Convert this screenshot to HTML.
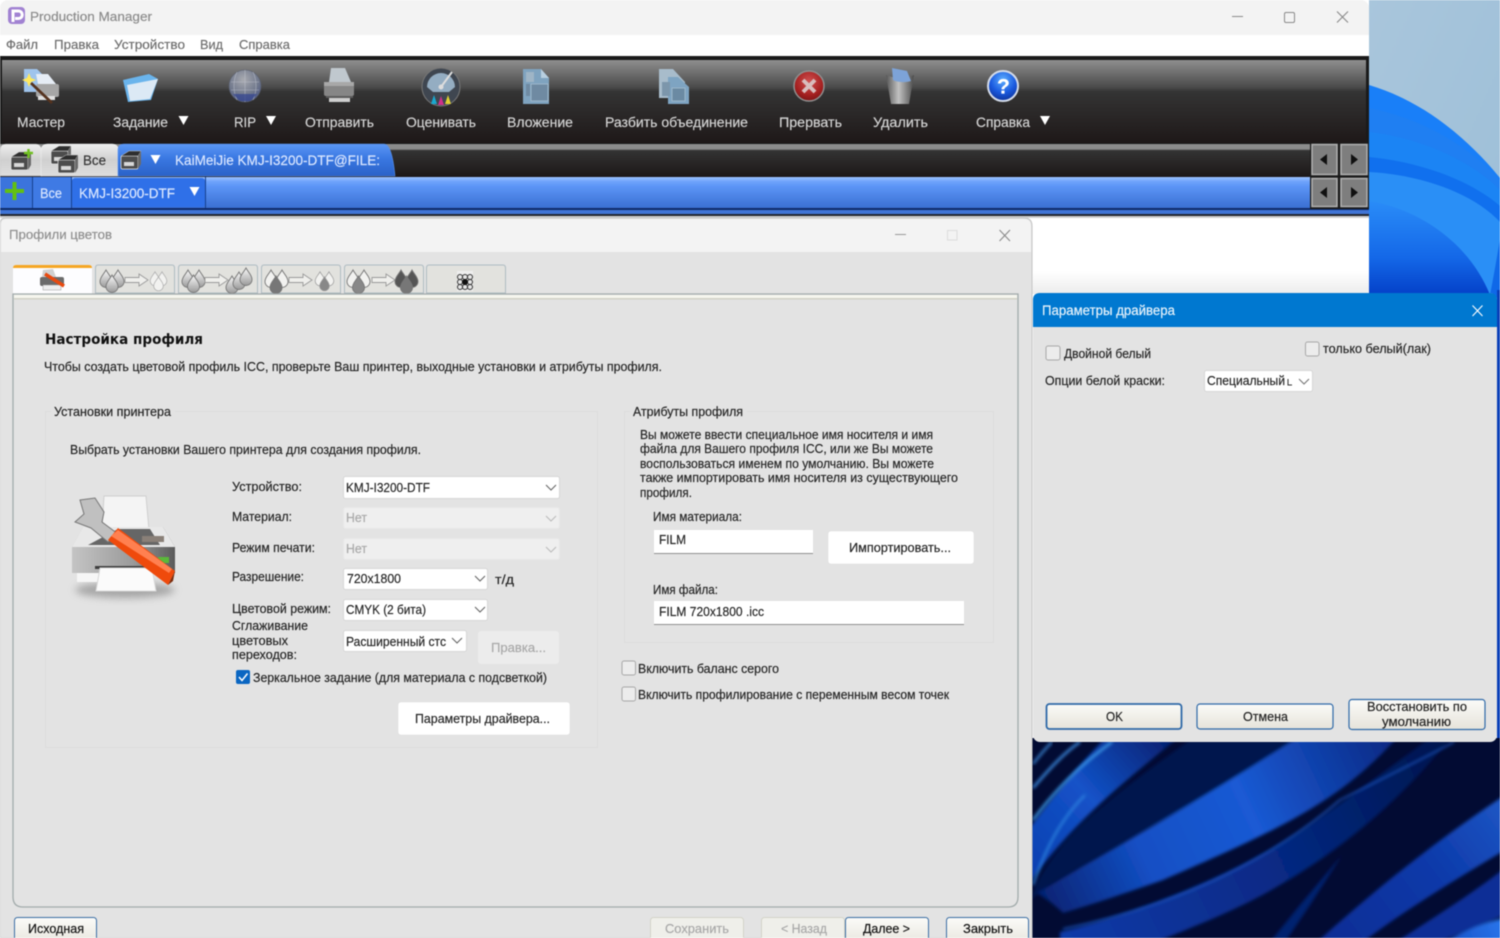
<!DOCTYPE html>
<html lang="ru"><head><meta charset="utf-8"><title>Production Manager</title>
<style>
html,body{margin:0;padding:0;width:1500px;height:938px;overflow:hidden;background:#fff}
svg{display:block;filter:blur(.45px)}
text{font-family:"Liberation Sans","DejaVu Sans",sans-serif;font-size:12.5px;fill:#262626;stroke:#262626;stroke-width:.18px}
.m{fill:#6e6e6e;stroke:#6e6e6e;font-size:12.5px}
.tb{fill:#d4d4d4;stroke:#d4d4d4;font-size:14px}
.d{fill:#a8a8a8;stroke:#a8a8a8}
.w{fill:#dbe7ff;stroke:#dbe7ff;font-size:14px}
</style></head><body>
<svg width="1500" height="938" viewBox="0 0 1500 938" xmlns="http://www.w3.org/2000/svg">
<defs>
<filter id="soft" x="-5%" y="-5%" width="110%" height="110%"><feGaussianBlur stdDeviation="1.6"/></filter>
<filter id="shad" x="-20%" y="-50%" width="140%" height="200%"><feGaussianBlur stdDeviation="4"/></filter>
<linearGradient id="sky" x1="0" y1="0" x2="1" y2="1"><stop offset="0" stop-color="#a9c6dc"/><stop offset="1" stop-color="#9dbfd8"/></linearGradient>
<linearGradient id="tbg" x1="0" y1="0" x2="0" y2="1"><stop offset="0" stop-color="#8f8f8f"/><stop offset=".33" stop-color="#4a4a4a"/><stop offset=".38" stop-color="#343434"/><stop offset="1" stop-color="#1e1818"/></linearGradient>
<linearGradient id="tab2" x1="0" y1="0" x2="0" y2="1"><stop offset="0" stop-color="#8c8c8c"/><stop offset=".15" stop-color="#8c8c8c"/><stop offset=".2" stop-color="#333"/><stop offset="1" stop-color="#1c1717"/></linearGradient>
<linearGradient id="blueb" x1="0" y1="0" x2="0" y2="1"><stop offset="0" stop-color="#9cc2ff"/><stop offset=".15" stop-color="#6ea3fb"/><stop offset=".3" stop-color="#5c95f6"/><stop offset="1" stop-color="#3a6fd2"/></linearGradient>
<linearGradient id="bluet" x1="0" y1="0" x2="0" y2="1"><stop offset="0" stop-color="#5b97f5"/><stop offset=".45" stop-color="#3a78e2"/><stop offset="1" stop-color="#2a62c8"/></linearGradient>
<linearGradient id="greyt" x1="0" y1="0" x2="0" y2="1"><stop offset="0" stop-color="#f0f0f0"/><stop offset=".5" stop-color="#d0d0d0"/><stop offset="1" stop-color="#dedede"/></linearGradient>
<linearGradient id="btn" x1="0" y1="0" x2="0" y2="1"><stop offset="0" stop-color="#fbfbf8"/><stop offset="1" stop-color="#e6e3da"/></linearGradient>
<linearGradient id="whitefade" x1="0" y1="0" x2="0" y2="1"><stop offset="0" stop-color="#fff"/><stop offset=".7" stop-color="#fff"/><stop offset="1" stop-color="#ececec"/></linearGradient>
<linearGradient id="w2" x1="0" y1="0" x2="0" y2="1"><stop offset="0" stop-color="#2a8cf8"/><stop offset=".6" stop-color="#1468e8"/><stop offset="1" stop-color="#0440c8"/></linearGradient>
<linearGradient id="swA" gradientUnits="userSpaceOnUse" x1="1033" y1="880" x2="1180" y2="750"><stop offset="0" stop-color="#0d3fb0"/><stop offset=".5" stop-color="#1352c8"/><stop offset="1" stop-color="#052070"/></linearGradient>
<linearGradient id="swB" gradientUnits="userSpaceOnUse" x1="1040" y1="910" x2="1390" y2="745"><stop offset="0" stop-color="#05206e"/><stop offset=".3" stop-color="#134fc4"/><stop offset=".6" stop-color="#1a5ad4"/><stop offset="1" stop-color="#082a86"/></linearGradient>
<linearGradient id="swC" gradientUnits="userSpaceOnUse" x1="1063" y1="930" x2="1440" y2="745"><stop offset="0" stop-color="#0c3aa8"/><stop offset=".5" stop-color="#072a86"/><stop offset="1" stop-color="#031650"/></linearGradient>
<linearGradient id="swD" gradientUnits="userSpaceOnUse" x1="1320" y1="938" x2="1500" y2="800"><stop offset="0" stop-color="#0a2c94"/><stop offset=".6" stop-color="#0d3aaa"/><stop offset="1" stop-color="#1d56c4"/></linearGradient>
<linearGradient id="swE" gradientUnits="userSpaceOnUse" x1="1400" y1="938" x2="1500" y2="900"><stop offset="0" stop-color="#0d3ab0"/><stop offset="1" stop-color="#2a78ee"/></linearGradient>
<radialGradient id="help" cx=".5" cy=".3" r=".75"><stop offset="0" stop-color="#5fb0ff"/><stop offset=".55" stop-color="#1a5ae0"/><stop offset="1" stop-color="#0c2d90"/></radialGradient>
<radialGradient id="red" cx=".5" cy=".35" r=".75"><stop offset="0" stop-color="#d05050"/><stop offset=".6" stop-color="#a52020"/><stop offset="1" stop-color="#6a1010"/></radialGradient>
<radialGradient id="glb" cx=".45" cy=".3" r=".8"><stop offset="0" stop-color="#a8aab0"/><stop offset=".6" stop-color="#70788c"/><stop offset="1" stop-color="#3d4a80"/></radialGradient>
<linearGradient id="trash" x1="0" y1="0" x2="1" y2="0"><stop offset="0" stop-color="#555"/><stop offset=".45" stop-color="#c2c2c2"/><stop offset="1" stop-color="#4a4a4a"/></linearGradient>
<linearGradient id="pbody" x1="0" y1="0" x2="1" y2="0"><stop offset="0" stop-color="#c4c4c4"/><stop offset=".6" stop-color="#9a9a9a"/><stop offset="1" stop-color="#5a5a5a"/></linearGradient>
<linearGradient id="dg" x1="0" y1="0" x2="0" y2="1"><stop offset="0" stop-color="#fafafa"/><stop offset="1" stop-color="#9a9a9a"/></linearGradient>
<path id="drop" d="M0,-9C2,-5 6,-2 6,2.5A6,6 0 0 1 -6,2.5C-6,-2 -2,-5 0,-9Z"/>
<path id="arr" d="M0,-2.5H14V-6L23,0L14,6V2.5H0Z" fill="#efefec" stroke="#9a9a9a"/>
<g id="cam"><rect x="-10" y="-5" width="17" height="13" rx="1.5" fill="#4c4c4c" stroke="#e6e6e6" stroke-width=".7"/><path d="M-10,-5L-2,-10H10L7,-5Z" fill="#2e2e2e" stroke="#ccc" stroke-width=".5"/><path d="M7,-5L10,-10V3L7,8Z" fill="#6a6a6a"/><rect x="-7" y="1" width="10" height="4" fill="#d8d8d8"/></g>
</defs>

<!-- wallpaper top -->
<rect x="1369" y="0" width="131" height="300" fill="url(#sky)"/>
<path d="M1369,85C1420,100 1465,135 1500,178V300H1369Z" fill="#197ff8"/>
<path d="M1369,108C1420,118 1468,145 1500,180V300H1369Z" fill="#1f7ff2"/>
<path d="M1369,132C1420,138 1470,160 1500,190V300H1369Z" fill="#1b84f4"/>
<path d="M1369,157C1420,162 1470,180 1500,206V300H1369Z" fill="#1070ee"/>
<path d="M1369,172C1425,175 1475,195 1500,222V300H1369Z" fill="#2a8ff6"/>
<path d="M1369,201C1415,208 1468,240 1490,295H1369Z" fill="url(#w2)"/>
<path d="M1490,295C1495,270 1498,250 1500,240V300H1490Z" fill="#0f68e8"/>
<rect x="1497" y="290" width="3" height="460" fill="#0a3fb8"/>

<!-- wallpaper bottom -->
<rect x="1032" y="738" width="468" height="200" fill="#020b33"/>
<g filter="url(#soft)">
<path d="M1030,900C1050,840 1120,790 1190,740H1300C1220,790 1140,830 1090,860C1060,878 1045,885 1037,895Z" fill="#03124e"/>
<path d="M1028,885C1070,825 1120,785 1178,738H1105C1075,770 1050,800 1028,830Z" fill="url(#swA)"/>
<path d="M1037,893C1097,857 1180,813 1297,738H1397C1340,800 1290,825 1163,880C1120,895 1090,905 1063,913C1055,905 1045,898 1037,893Z" fill="url(#swB)"/>
<path d="M1060,932C1120,918 1230,880 1310,825C1360,790 1400,760 1430,738H1450C1410,790 1350,845 1280,885C1230,915 1170,935 1150,945H1060Z" fill="url(#swC)"/>
<path d="M1317,942C1380,885 1440,838 1505,795V850C1455,880 1405,910 1363,942Z" fill="url(#swD)"/>
<path d="M1396,942C1430,920 1470,895 1505,868V915C1480,925 1455,935 1440,942Z" fill="#0b2f96"/>
<path d="M1445,942C1465,930 1485,922 1505,918V942Z" fill="url(#swE)"/>
<path d="M1270,942L1300,905L1342,855L1310,905L1285,942Z" fill="#062070"/>
</g>
<path d="M1033,764C1040,755 1046,748 1052,742" stroke="#3f90e0" stroke-width="2" fill="none" filter="url(#soft)"/>
<path d="M1033,788C1050,768 1065,752 1080,742" stroke="#3c8ce0" stroke-width="2.500" fill="none" filter="url(#soft)"/>
<path d="M1033,820C1055,790 1080,765 1112,742" stroke="#3c9ae8" stroke-width="2.500" fill="none" filter="url(#soft)"/>
<path d="M1033,885C1045,850 1060,820 1085,795" stroke="#2f86e0" stroke-width="2" fill="none" filter="url(#soft)"/>
<path d="M1063,929C1180,905 1270,860 1340,800C1400,770 1430,755 1454,742" stroke="#1f5cc8" stroke-width="1.500" fill="none" filter="url(#soft)"/>

<!-- main window -->
<rect x="0" y="0" width="1369" height="60" rx="8" fill="#f3f3f3"/>
<rect x="0" y="35" width="1369" height="21" fill="#fff"/>
<rect x="8" y="7" width="17" height="17" rx="4" fill="#a182d2"/>
<path d="M13,22V11H18.500A3.700,3.700 0 0 1 18.500,18.500H15" fill="none" stroke="#fff" stroke-width="3"/>
<text x="30" y="21" textLength="122" lengthAdjust="spacingAndGlyphs" style="font-size:13px;fill:#8b8b8b;stroke:#8b8b8b">Production Manager</text>
<path d="M1232,16.500H1243" stroke="#8a8a8a"/>
<rect x="1284.500" y="12.500" width="10" height="10" rx="1.500" fill="none" stroke="#8a8a8a"/>
<path d="M1337,11.500L1348,22.500M1348,11.500L1337,22.500" stroke="#8a8a8a" stroke-width="1.100"/>
<text class="m" x="6" y="49" textLength="32" lengthAdjust="spacingAndGlyphs">Файл</text>
<text class="m" x="54" y="49" textLength="45" lengthAdjust="spacingAndGlyphs">Правка</text>
<text class="m" x="114" y="49" textLength="71" lengthAdjust="spacingAndGlyphs">Устройство</text>
<text class="m" x="200" y="49" textLength="23" lengthAdjust="spacingAndGlyphs">Вид</text>
<text class="m" x="239" y="49" textLength="51" lengthAdjust="spacingAndGlyphs">Справка</text>

<rect x="0" y="56" width="1369" height="162" fill="#1a1a1a"/>
<rect x="2" y="60" width="1364" height="83" fill="url(#tbg)"/>

<!-- toolbar icons -->
<g>
<path d="M24,69H37L44,76V92H24Z" fill="#9fc4ec"/><path d="M36,74H48L56,84H38Z" fill="#e6edf5"/><rect x="36" y="84" width="23" height="13" rx="2" fill="#a6a6a6"/><rect x="38" y="96" width="17" height="4" fill="#e0e0e0"/><path d="M31,83L52,103" stroke="#55321e" stroke-width="2.800"/><path d="M29,73l2,5 5,2-5,2-2,5-2-5-5-2 5-2Z" fill="#ffe95e"/>
<path d="M123,80L149,74L158,79L151,100L128,102Z" fill="#6ab4ec"/><path d="M127,85L158,79L150,99L130,101Z" fill="#dce9f5"/>
<circle cx="245" cy="86" r="16" fill="url(#glb)" stroke="#5a6070" stroke-width=".6"/><path d="M231,82H259M231,90H259M245,70V102M237,72C233,80 233,92 237,100M253,72C257,80 257,92 253,100" stroke="#c6cad4" stroke-width=".6" fill="none" opacity=".7"/><path d="M233,94H257L250,101H240Z" fill="#3a4a90" opacity=".8"/>
<path d="M331,68H345L351,82H329Z" fill="#c0c8ce"/><rect x="324" y="82" width="30" height="14" rx="2" fill="#868686"/><rect x="324" y="82" width="30" height="4" fill="#a8a8a8"/><rect x="329" y="96" width="21" height="6" fill="#cfcfcf"/><rect x="326" y="96" width="27" height="2" fill="#5c5c5c"/>
<circle cx="441" cy="87" r="19" fill="#3f4650" stroke="#777"/><path d="M427,87A14,14 0 0 1 455,87L449,92H433Z" fill="#94adc2"/><path d="M441,87L452,72" stroke="#ddd" stroke-width="2"/><circle cx="441" cy="87" r="2.500" fill="#ddd"/><path d="M431,104l3-9 3,9Z" fill="#19a9d0"/><path d="M438,105l3-9 3,9Z" fill="#d0308a"/><path d="M445,104l3-9 3,9Z" fill="#e0d030"/>
<path d="M523,69H541L549,78V104H523Z" fill="#7fa3bf"/><path d="M541,69L549,78H541Z" fill="#b8cfe0"/><rect x="531" y="84" width="17" height="17" fill="#6f8aa2" stroke="#9cb6ca"/><rect x="526" y="72" width="8" height="10" fill="#9fb5c6"/><rect x="526" y="84" width="4" height="12" fill="#6f8aa2"/>
<path d="M645,69H659L671,82V98H645Z" transform="translate(14 0)" fill="#a8bccb"/><path d="M668,77H678L689,87V104H668Z" fill="#7ea4c2"/><rect x="672" y="88" width="13" height="13" fill="#6b8aa3" stroke="#9cb6ca"/><rect x="662" y="82" width="8" height="14" fill="#7c96ab"/>
<circle cx="809" cy="86" r="15" fill="url(#red)" stroke="#8f8f8f" stroke-width="1.500"/><path d="M803,80L815,92M815,80L803,92" stroke="#d8bcbc" stroke-width="4"/>
<path d="M886,75C895,79 905,79 914,75L909,104H891Z" fill="url(#trash)"/><path d="M892,68L907,71L911,81C904,83 897,82 893,80Z" fill="#7da3d8"/>
<circle cx="1003" cy="86" r="15" fill="url(#help)" stroke="#d4dcea" stroke-width="2"/><text x="997" y="93.500" style="font-size:21px;font-weight:bold;fill:#fff;stroke:#fff;stroke-width:.2px">?</text>
</g>

<text class="tb" x="17" y="127" textLength="48" lengthAdjust="spacingAndGlyphs">Мастер</text>
<text class="tb" x="113" y="127" textLength="55" lengthAdjust="spacingAndGlyphs">Задание</text>
<text class="tb" x="234" y="127" textLength="22" lengthAdjust="spacingAndGlyphs">RIP</text>
<text class="tb" x="305" y="127" textLength="69" lengthAdjust="spacingAndGlyphs">Отправить</text>
<text class="tb" x="406" y="127" textLength="70" lengthAdjust="spacingAndGlyphs">Оценивать</text>
<text class="tb" x="507" y="127" textLength="66" lengthAdjust="spacingAndGlyphs">Вложение</text>
<text class="tb" x="605" y="127" textLength="143" lengthAdjust="spacingAndGlyphs">Разбить объединение</text>
<text class="tb" x="779" y="127" textLength="63" lengthAdjust="spacingAndGlyphs">Прервать</text>
<text class="tb" x="873" y="127" textLength="55" lengthAdjust="spacingAndGlyphs">Удалить</text>
<text class="tb" x="976" y="127" textLength="54" lengthAdjust="spacingAndGlyphs">Справка</text>
<path d="M178.500,116H188.500L183.500,125Z M266,116H276L271,125Z M1040,116H1050L1045,125Z" fill="#fff"/>

<!-- tab row -->
<rect x="0" y="144" width="1310" height="33" fill="url(#tab2)"/>
<path d="M0,176V150Q0,144 6,144H36Q41,144 42,150V176Z" fill="url(#greyt)" stroke="#9a9a9a" stroke-width=".6"/>
<path d="M41,176V151Q41,144 48,144H112Q118,144 119,151V176Z" fill="url(#greyt)" stroke="#eee" stroke-width=".6"/>
<path d="M118,176V150Q118,144 124,144H384Q392,144 395,176Z" fill="url(#bluet)" stroke="#5a93f0" stroke-width=".6"/>
<use href="#cam" x="21" y="162"/><path d="M24,153H33M28.500,149V158" stroke="#70c020" stroke-width="2.500"/>
<use href="#cam" x="61" y="156"/><use href="#cam" x="68" y="165"/>
<use href="#cam" x="131" y="161"/>
<text x="83" y="165" textLength="23" lengthAdjust="spacingAndGlyphs" style="font-size:14px;fill:#333;stroke:#333">Все</text>
<path d="M150.500,155H160.500L155.500,164Z" fill="#fff"/>
<text class="w" x="175" y="165" textLength="205" lengthAdjust="spacingAndGlyphs">KaiMeiJie KMJ-I3200-DTF@FILE:</text>

<!-- blue row -->
<rect x="0" y="177" width="1310" height="31" fill="url(#blueb)"/>
<rect x="0" y="208" width="1369" height="2" fill="#0e2a68"/>
<rect x="0" y="210" width="1369" height="4" fill="#3f74d6"/>
<rect x="0" y="214" width="1369" height="2" fill="#23262e"/>
<rect x="0" y="216" width="1369" height="2" fill="#cfcfcf"/>
<rect x="0" y="177" width="32" height="31" fill="#3b74dc"/><path d="M32.500,177V208" stroke="#16408e"/>
<rect x="33" y="177" width="38" height="31" fill="#3f7ae4"/><path d="M71.500,177V208" stroke="#16408e"/>
<rect x="72" y="178" width="133" height="29" rx="3" fill="#2f70e8"/><path d="M205.500,177V208" stroke="#16408e"/>
<path d="M5,191H24M14.500,182V200" stroke="#62c012" stroke-width="4"/>
<text x="40" y="198" textLength="22" lengthAdjust="spacingAndGlyphs" style="font-size:13.500px;fill:#dbe7ff;stroke:#dbe7ff">Все</text>
<text x="79" y="198" textLength="96" lengthAdjust="spacingAndGlyphs" style="font-size:13.500px;fill:#dbe7ff;stroke:#dbe7ff">KMJ-I3200-DTF</text>
<path d="M189.500,187H199.500L194.500,196Z" fill="#fff"/>

<!-- nav buttons -->
<rect x="1310" y="143" width="59" height="66" fill="#1a1a1a"/>
<g fill="#7e7e7e" stroke="#b2b2b2" stroke-width="1.500">
<rect x="1312" y="144.500" width="25" height="30"/><rect x="1341" y="144.500" width="26" height="30"/>
<rect x="1312" y="178.500" width="25" height="28"/><rect x="1341" y="178.500" width="26" height="28"/>
</g>
<path d="M1327,154V165L1320,159.500Z M1351,154V165L1358,159.500Z M1327,187V198L1320,192.500Z M1351,187V198L1358,192.500Z" fill="#101010"/>

<!-- white below main -->
<rect x="1030" y="218" width="339" height="76" fill="url(#whitefade)"/>

<!-- colour profile dialog -->
<path d="M0,938V224Q0,218 6,218H1024Q1032,218 1032,226V938Z" fill="#e3e3e3" stroke="#c4c4c4"/>
<path d="M1,252V224Q1,219 6,219H1024Q1031,219 1031,226V252Z" fill="#f3f3f3"/>
<text x="9" y="239" textLength="103" lengthAdjust="spacingAndGlyphs" style="font-size:13px;fill:#8f8f8f;stroke:#8f8f8f">Профили цветов</text>
<path d="M895,234.500H906" stroke="#999"/>
<rect x="947.500" y="230.500" width="9.500" height="9.500" fill="none" stroke="#dcdcdc"/>
<path d="M999.500,230L1010,241M1010,230L999.500,241" stroke="#8a8a8a" stroke-width="1.100"/>

<!-- tabs -->
<g fill="#e2e2de" stroke="#aebbc2">
<path d="M95.500,293V268Q95.500,265 98,265H172Q174.500,265 174.500,268V293Z"/>
<path d="M178.500,293V268Q178.500,265 181,265H255Q257.500,265 257.500,268V293Z"/>
<path d="M261.500,293V268Q261.500,265 264,265H338Q340.500,265 340.500,268V293Z"/>
<path d="M344.500,293V268Q344.500,265 347,265H421Q423.500,265 423.500,268V293Z"/>
<path d="M426.500,293V268Q426.500,265 429,265H503Q505.500,265 505.500,268V293Z"/>
</g>
<path d="M13,294V268Q13,265 16,265H89Q92,265 92,268V294Z" fill="#fdfdff"/>
<path d="M13,268Q13,265 16,265H89Q92,265 92,268Z" fill="#f5a623"/>
<!-- tab icons -->
<g transform="translate(52,280)"><path d="M-9,-10L1,-11L4,-3H-10Z" fill="#d0d0d0"/><rect x="-12" y="-3" width="24" height="9" rx="2" fill="#6b6b6b"/><rect x="-9" y="5" width="18" height="5" fill="#eee" stroke="#999" stroke-width=".5"/><path d="M-7,-6L12,6" stroke="#e84a10" stroke-width="3.500"/></g>
<g stroke="#777" stroke-width=".9">
<g fill="url(#dg)"><use href="#drop" x="106" y="279"/><use href="#drop" x="118" y="279"/><use href="#drop" x="112" y="284"/></g>
<use href="#arr" x="125" y="280"/>
<g fill="#f2f2f0" stroke="#aaa"><use href="#drop" transform="translate(155 279) scale(.8)"/><use href="#drop" transform="translate(162 279) scale(.8)"/><use href="#drop" transform="translate(158.500 284) scale(.8)"/></g>
<g fill="url(#dg)"><use href="#drop" x="188" y="279"/><use href="#drop" x="199" y="279"/><use href="#drop" x="193.500" y="284"/></g>
<use href="#arr" x="205" y="280"/>
<g fill="url(#dg)"><use href="#drop" x="232" y="285"/><use href="#drop" x="239" y="281"/><use href="#drop" x="246" y="277"/></g>
<g fill="#f2f2f0"><use href="#drop" x="271" y="279"/><use href="#drop" x="282" y="279"/></g><use href="#drop" x="276" y="285" fill="#777"/>
<use href="#arr" x="289" y="280"/>
<g fill="#f2f2f0" stroke="#999"><use href="#drop" transform="translate(320 279) scale(.8)"/><use href="#drop" transform="translate(329 279) scale(.8)"/></g><use href="#drop" transform="translate(324.500 284) scale(.8)" fill="#888" stroke="#999"/>
<g fill="#f2f2f0"><use href="#drop" x="353" y="279"/><use href="#drop" x="364" y="279"/></g><use href="#drop" x="358.500" y="285" fill="#888"/>
<use href="#arr" x="372" y="280"/>
<g fill="#555"><use href="#drop" x="401" y="279"/><use href="#drop" x="412" y="279"/></g><use href="#drop" x="406.500" y="285" fill="#777"/>
</g>
<g><rect x="457" y="271" width="16" height="20" fill="#eee"/><g fill="#e6e6e6" stroke="#333" stroke-width="1"><circle cx="460" cy="277" r="2.500"/><circle cx="465" cy="277" r="2.500"/><circle cx="470" cy="277" r="2.500"/><circle cx="460" cy="282" r="2.500"/><circle cx="470" cy="282" r="2.500"/><circle cx="460" cy="287" r="2.500"/><circle cx="465" cy="287" r="2.500"/><circle cx="470" cy="287" r="2.500"/></g><circle cx="465" cy="282" r="3" fill="#111"/></g>

<!-- panel -->
<path d="M13,294H1018V897Q1018,907 1008,907H23Q13,907 13,897Z" fill="#e3e3e3" stroke="#a2abab" stroke-width="1.300"/>
<rect x="14" y="295" width="1003" height="3" fill="#f6f6ee"/>
<rect x="14" y="298" width="1003" height="1.500" fill="#d2d2c6"/>

<text x="45" y="344" textLength="158" lengthAdjust="spacingAndGlyphs" style="font-family:'DejaVu Sans','Liberation Sans',sans-serif;font-size:14.500px;font-weight:bold;fill:#111;stroke:none">Настройка профиля</text>
<text x="44" y="371" textLength="618" lengthAdjust="spacingAndGlyphs">Чтобы создать цветовой профиль ICC, проверьте Ваш принтер, выходные установки и атрибуты профиля.</text>

<!-- group 1 -->
<rect x="45.500" y="411.500" width="552" height="336" fill="none" stroke="#dcdcdc"/>
<rect x="51" y="405" width="124" height="14" fill="#e3e3e3"/>
<text x="54" y="416" textLength="117" lengthAdjust="spacingAndGlyphs">Установки принтера</text>
<text x="70" y="454" textLength="351" lengthAdjust="spacingAndGlyphs">Выбрать установки Вашего принтера для создания профиля.</text>

<!-- big printer icon -->
<g>
<ellipse cx="125" cy="590" rx="50" ry="8" fill="#8a8a8a" opacity=".7" filter="url(#shad)"/>
<path d="M104,496H146L149,530H102Z" fill="#f4f4f4" stroke="#cfcfcf"/>
<path d="M83,527H163L175,547V573H72V547Z" fill="url(#pbody)"/>
<path d="M83,527H163L175,547H72Z" fill="#e8e8e8"/>
<path d="M88,545L118,529H150L160,545Z" fill="#666"/>
<rect x="142" y="536" width="22" height="6" fill="#8a8078"/>
<rect x="158" y="557" width="11" height="6" fill="#5ab83a"/>
<rect x="95" y="566" width="60" height="3" fill="#3e3e3e"/>
<rect x="77" y="573" width="24" height="9" fill="#f6f6f6"/>
<path d="M100,568H152L156,591H96Z" fill="#fbfbfb" stroke="#d8d8d8"/>
<path d="M80,500L95,498L104,512L102,522L118,534L108,542L91,528L75,522L84,514Z" fill="#c0c0c0" stroke="#777"/>
<path d="M108,540L118,528L175,571L168,585Z" fill="#ef4a0c"/>
<path d="M111,536L118,530L172,569L169,573Z" fill="#ff8050"/>
<path d="M168,585L175,571L173,581Z" fill="#7a2a0a"/>
</g>

<text x="232" y="491" textLength="70" lengthAdjust="spacingAndGlyphs">Устройство:</text>
<text x="232" y="521" textLength="60" lengthAdjust="spacingAndGlyphs">Материал:</text>
<text x="232" y="552" textLength="83" lengthAdjust="spacingAndGlyphs">Режим печати:</text>
<text x="232" y="581" textLength="72" lengthAdjust="spacingAndGlyphs">Разрешение:</text>
<text x="232" y="613" textLength="99" lengthAdjust="spacingAndGlyphs">Цветовой режим:</text>
<text x="232" y="630" textLength="76" lengthAdjust="spacingAndGlyphs">Сглаживание</text>
<text x="232" y="645" textLength="56" lengthAdjust="spacingAndGlyphs">цветовых</text>
<text x="232" y="659" textLength="65" lengthAdjust="spacingAndGlyphs">переходов:</text>

<g fill="#fff" stroke="#d6d6d6">
<rect x="343.500" y="476.500" width="216" height="22" rx="2"/>
<rect x="343.500" y="568.500" width="144" height="21" rx="2"/>
<rect x="343.500" y="599.500" width="144" height="21" rx="2"/>
<rect x="343.500" y="630.500" width="123" height="21" rx="2"/>
</g>
<rect x="343.500" y="507.500" width="216" height="21" rx="2" fill="#efefef" stroke="#e6e6e6"/>
<rect x="343.500" y="538.500" width="216" height="21" rx="2" fill="#efefef" stroke="#e6e6e6"/>
<g fill="none" stroke="#666" stroke-width="1.100">
<path d="M546,485L551,490L556,485M475,576L480,581L485,576M475,607L480,612L485,607M452,638L457,643L462,638"/>
</g>
<path d="M546,516L551,521L556,516M546,547L551,552L556,547" fill="none" stroke="#bbb" stroke-width="1.100"/>
<text x="346" y="492" textLength="84" lengthAdjust="spacingAndGlyphs">KMJ-I3200-DTF</text>
<text class="d" x="346" y="522" textLength="21" lengthAdjust="spacingAndGlyphs">Нет</text>
<text class="d" x="346" y="553" textLength="21" lengthAdjust="spacingAndGlyphs">Нет</text>
<text x="347" y="583" textLength="54" lengthAdjust="spacingAndGlyphs">720x1800</text>
<text x="495" y="584" textLength="19" lengthAdjust="spacingAndGlyphs">т/д</text>
<text x="346" y="614" textLength="80" lengthAdjust="spacingAndGlyphs">CMYK (2 бита)</text>
<text x="346" y="646" textLength="100" lengthAdjust="spacingAndGlyphs">Расширенный стс</text>
<rect x="478" y="631" width="81" height="33" rx="3" fill="#ececec"/>
<text class="d" x="491" y="652" textLength="55" lengthAdjust="spacingAndGlyphs">Правка...</text>
<rect x="236" y="670" width="14" height="14" rx="2" fill="#0a66c2"/>
<path d="M239,677L242,680.500L247.500,673.500" fill="none" stroke="#fff" stroke-width="1.500"/>
<text x="253" y="682" textLength="294" lengthAdjust="spacingAndGlyphs">Зеркальное задание (для материала с подсветкой)</text>
<rect x="398" y="702" width="172" height="33" rx="3" fill="#fff" stroke="#ddd" stroke-width=".5"/>
<text x="415" y="723" textLength="135" lengthAdjust="spacingAndGlyphs">Параметры драйвера...</text>

<!-- group 2 -->
<rect x="624.500" y="411.500" width="369" height="231" fill="none" stroke="#dcdcdc"/>
<rect x="630" y="405" width="117" height="14" fill="#e3e3e3"/>
<text x="633" y="416" textLength="110" lengthAdjust="spacingAndGlyphs">Атрибуты профиля</text>
<text x="640" y="439" textLength="293" lengthAdjust="spacingAndGlyphs">Вы можете ввести специальное имя носителя и имя</text>
<text x="640" y="453" textLength="293" lengthAdjust="spacingAndGlyphs">файла для Вашего профиля ICC, или же Вы можете</text>
<text x="640" y="468" textLength="294" lengthAdjust="spacingAndGlyphs">воспользоваться именем по умолчанию. Вы можете</text>
<text x="640" y="482" textLength="318" lengthAdjust="spacingAndGlyphs">также импортировать имя носителя из существующего</text>
<text x="640" y="497" textLength="52" lengthAdjust="spacingAndGlyphs">профиля.</text>
<text x="653" y="521" textLength="89" lengthAdjust="spacingAndGlyphs">Имя материала:</text>
<rect x="654" y="530" width="159" height="24" fill="#fff"/><rect x="654" y="553" width="159" height="1" fill="#8f8f8f"/>
<text x="659" y="544" textLength="27" lengthAdjust="spacingAndGlyphs">FILM</text>
<rect x="828" y="531" width="146" height="33" rx="3" fill="#fff" stroke="#ddd" stroke-width=".5"/>
<text x="849" y="552" textLength="102" lengthAdjust="spacingAndGlyphs">Импортировать...</text>
<text x="653" y="594" textLength="65" lengthAdjust="spacingAndGlyphs">Имя файла:</text>
<rect x="654" y="601" width="310" height="24" fill="#fff"/><rect x="654" y="624" width="310" height="1" fill="#8f8f8f"/>
<text x="659" y="616" textLength="105" lengthAdjust="spacingAndGlyphs">FILM 720x1800 .icc</text>

<rect x="622" y="661" width="13.500" height="14" rx="2" fill="#ececec" stroke="#a8a8a8"/>
<text x="638" y="673" textLength="141" lengthAdjust="spacingAndGlyphs">Включить баланс серого</text>
<rect x="622" y="687" width="13.500" height="14" rx="2" fill="#ececec" stroke="#a8a8a8"/>
<text x="638" y="699" textLength="311" lengthAdjust="spacingAndGlyphs">Включить профилирование с переменным весом точек</text>

<!-- bottom buttons -->
<g stroke="#3b6ea5" fill="url(#btn)">
<rect x="14.500" y="917.500" width="82" height="30" rx="3"/>
<rect x="845.500" y="917.500" width="83" height="30" rx="3"/>
<rect x="946.500" y="917.500" width="82" height="30" rx="3"/>
</g>
<g stroke="#d4d4c8" fill="#efefea">
<rect x="650.500" y="917.500" width="93" height="30" rx="3"/>
<rect x="761.500" y="917.500" width="83" height="30" rx="3"/>
</g>
<text x="28" y="933" textLength="56" lengthAdjust="spacingAndGlyphs" style="fill:#111;stroke:#111">Исходная</text>
<text class="d" x="665" y="933" textLength="64" lengthAdjust="spacingAndGlyphs">Сохранить</text>
<text class="d" x="781" y="933" textLength="46" lengthAdjust="spacingAndGlyphs">&lt; Назад</text>
<text x="863" y="933" textLength="47" lengthAdjust="spacingAndGlyphs" style="fill:#111;stroke:#111">Далее &gt;</text>
<text x="963" y="933" textLength="50" lengthAdjust="spacingAndGlyphs" style="fill:#111;stroke:#111">Закрыть</text>

<!-- driver dialog -->
<rect x="1033" y="293" width="464" height="449" rx="7" fill="#e3e3e3"/>
<path d="M1033,327V300Q1033,293 1040,293H1490Q1497,293 1497,300V327Z" fill="#0078d0"/>
<text x="1042" y="315" textLength="133" lengthAdjust="spacingAndGlyphs" style="font-size:13.500px;fill:#e8f3fb;stroke:#e8f3fb">Параметры драйвера</text>
<path d="M1472.500,305.500L1482.500,316M1482.500,305.500L1472.500,316" stroke="#fff" stroke-width="1.100"/>
<rect x="1046" y="346" width="14" height="14" rx="2" fill="#ececec" stroke="#a8a8a8"/>
<text x="1064" y="358" textLength="87" lengthAdjust="spacingAndGlyphs">Двойной белый</text>
<rect x="1305.500" y="342" width="13.500" height="14" rx="2" fill="#ececec" stroke="#a8a8a8"/>
<text x="1323" y="353" textLength="108" lengthAdjust="spacingAndGlyphs">только белый(лак)</text>
<text x="1045" y="385" textLength="120" lengthAdjust="spacingAndGlyphs">Опции белой краски:</text>
<rect x="1204.500" y="370.500" width="108" height="21" rx="2" fill="#fff" stroke="#d6d6d6"/>
<text x="1207" y="385" textLength="78" lengthAdjust="spacingAndGlyphs">Специальный</text>
<path d="M1288,379V385H1292" fill="none" stroke="#333"/>
<path d="M1299,379L1304,384L1309,379" fill="none" stroke="#777" stroke-width="1.100"/>
<g stroke="#2f69a8" stroke-width="1.200" fill="url(#btn)">
<rect x="1046.500" y="704" width="135" height="25" rx="3" stroke-width="1.800"/>
<rect x="1197" y="704" width="136" height="25" rx="3"/>
<rect x="1349" y="699.500" width="136" height="30" rx="3"/>
</g>
<text x="1106" y="721" textLength="17" lengthAdjust="spacingAndGlyphs" style="fill:#222">OK</text>
<text x="1243" y="721" textLength="45" lengthAdjust="spacingAndGlyphs" style="fill:#222">Отмена</text>
<text x="1367" y="711" textLength="100" lengthAdjust="spacingAndGlyphs" style="fill:#222">Восстановить по</text>
<text x="1382" y="726" textLength="69" lengthAdjust="spacingAndGlyphs" style="fill:#222">умолчанию</text>
</svg>
</body></html>
